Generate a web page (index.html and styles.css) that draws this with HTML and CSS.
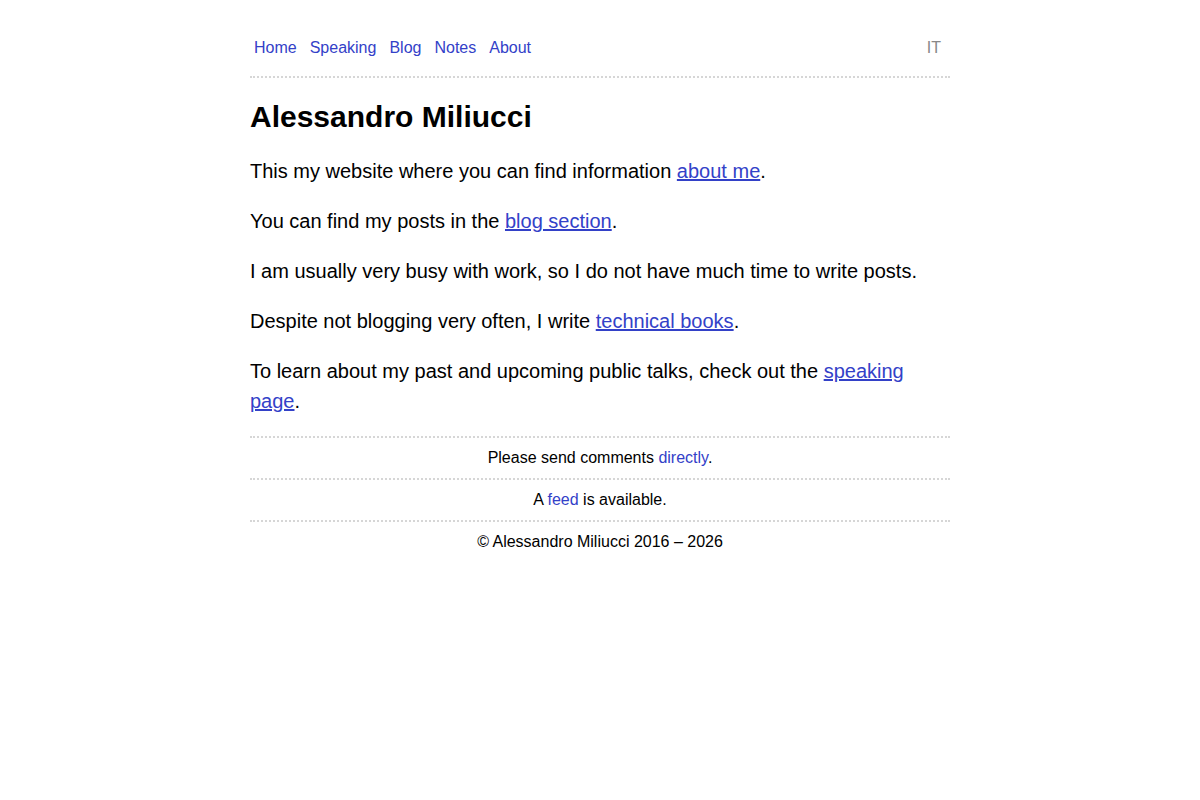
FILE: index.html
```html
<!DOCTYPE html>
<html lang="en">
<head>
<meta charset="utf-8">
<title>Alessandro Miliucci</title>
<link rel="stylesheet" href="styles.css">
</head>
<body>
<div class="page">
  <header class="nav">
    <nav class="nav-links">
      <a href="#">Home</a>
      <a href="#">Speaking</a>
      <a href="#">Blog</a>
      <a href="#">Notes</a>
      <a href="#">About</a>
    </nav>
    <a class="lang" href="#">IT</a>
  </header>
  <main class="content">
    <h1>Alessandro Miliucci</h1>
    <p>This my website where you can find information <a href="#">about me</a>.</p>
    <p>You can find my posts in the <a href="#">blog section</a>.</p>
    <p>I am usually very busy with work, so I do not have much time to write posts.</p>
    <p>Despite not blogging very often, I write <a href="#">technical books</a>.</p>
    <p>To learn about my past and upcoming public talks, check out the <a href="#">speaking page</a>.</p>
  </main>
  <footer class="footer">
    <div class="footer-row">Please send comments <a href="#">directly</a>.</div>
    <div class="footer-row">A <a href="#">feed</a> is available.</div>
    <div class="footer-row">© Alessandro Miliucci 2016 – 2026</div>
  </footer>
</div>
</body>
</html>
```
FILE: styles.css
```css
html, body {
  margin: 0;
  padding: 0;
  background: #fff;
}
body {
  font-family: "Liberation Sans", Arial, sans-serif;
  color: #000;
}
a {
  color: #3341c8;
}
.page {
  width: 700px;
  margin: 0 auto;
  padding-top: 37px;
}
.nav {
  display: flex;
  justify-content: space-between;
  align-items: center;
  font-size: 16px;
  line-height: 22px;
  padding: 0 9px 17px 4px;
  border-bottom: 2px dotted #d6d6d6;
}
.nav-links {
  display: flex;
  gap: 13px;
}
.nav a {
  text-decoration: none;
}
.nav .lang {
  color: #888;
}
.content {
  padding: 20px 0 0;
  font-size: 20px;
  line-height: 30px;
}
.content h1 {
  margin: 0 0 20px;
  font-size: 30px;
  line-height: 38px;
  font-weight: bold;
}
.content p {
  margin: 0 0 20px;
}
.footer {
  font-size: 16px;
  line-height: 20px;
  text-align: center;
}
.footer-row {
  border-top: 2px dotted #d6d6d6;
  padding: 10px 0;
}
.footer-row a {
  text-decoration: none;
}
```
